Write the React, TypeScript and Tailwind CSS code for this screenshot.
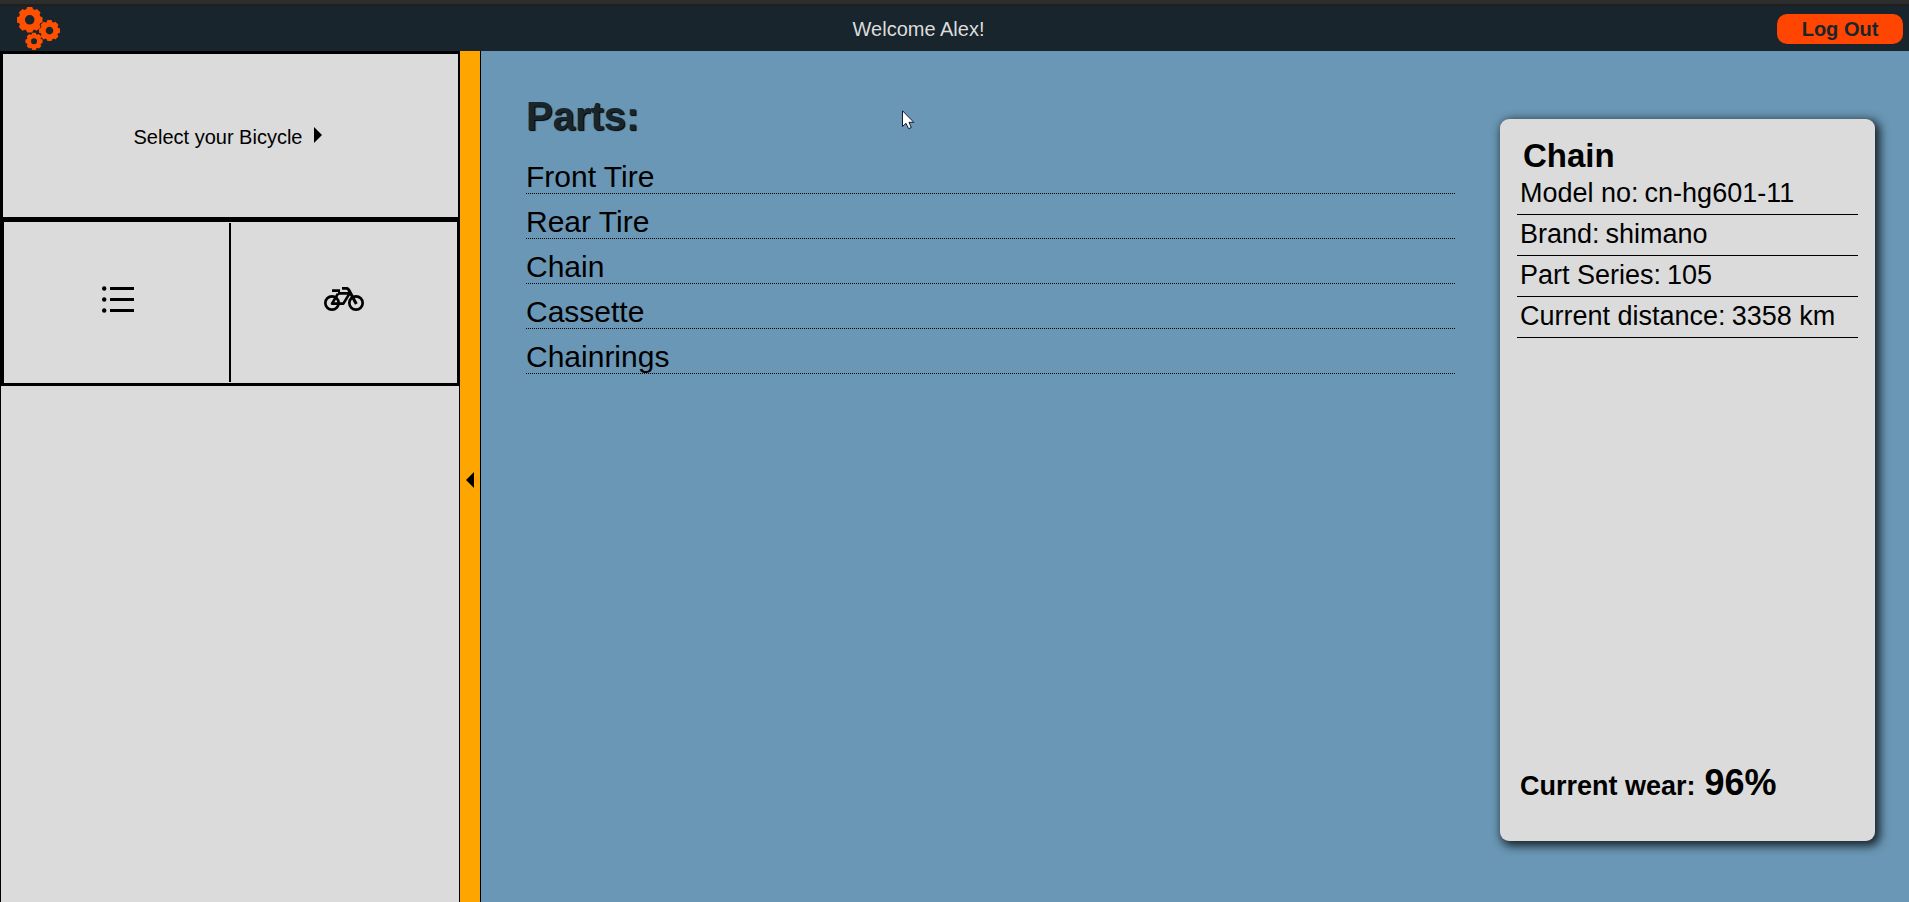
const parts = ["Front Tire", "Rear Tire", "Chain", "Cassette", "Chainrings"];

const details = [
  { label: "Model no", value: "cn-hg601-11" },
  { label: "Brand", value: "shimano" },
  { label: "Part Series", value: "105" },
  { label: "Current distance", value: "3358 km" },
];

type GearProps = { cx: number; cy: number; r: number; hole: number };

function Gear({ cx, cy, r, hole }: GearProps) {
  const teeth = 8;
  const body = r * 0.86;
  const ring = (body + hole) / 2;
  return (
    <g transform={`translate(${cx} ${cy})`}>
      <circle r={ring} fill="none" stroke="currentColor" strokeWidth={body - hole} />
      {Array.from({ length: teeth }, (_, i) => (
        <path
          key={i}
          transform={`rotate(${(360 / teeth) * i})`}
          d={`M${-r * 0.28} ${-body + 1} L${-r * 0.2} ${-r} H${r * 0.2} L${r * 0.28} ${-body + 1}Z`}
          fill="currentColor"
        />
      ))}
    </g>
  );
}

function Logo() {
  return (
    <svg width="43" height="43" viewBox="0 0 43 43" aria-hidden="true">
      <Gear cx={12.7} cy={12.8} r={12.8} hole={4.8} />
      <Gear cx={32.5} cy={23.6} r={10.5} hole={3.8} />
      <Gear cx={17} cy={34.3} r={8.6} hole={3} />
    </svg>
  );
}

function ListIcon() {
  return (
    <svg width="32" height="27" viewBox="0 0 32 27" aria-hidden="true">
      {[2.5, 13.5, 24.5].map((y) => (
        <g key={y}>
          <circle cx="2.2" cy={y} r="2.2" />
          <rect x="8" y={y - 1.5} width="24" height="3" />
        </g>
      ))}
    </svg>
  );
}

function BikeIcon() {
  return (
    <svg width="40" height="24" viewBox="0 0 120 72" fill="none" stroke="currentColor" strokeWidth="8" aria-hidden="true">
      <circle cx="24" cy="48" r="20" />
      <circle cx="96" cy="48" r="20" />
      <path d="M24 11H48M42 20L24 50H58L77 19H42" strokeLinejoin="round" />
      <path d="M54 4H67Q72 4 75 10L97 51" strokeWidth="9" />
    </svg>
  );
}

export default function App() {
  return (
    <div className="relative flex min-h-screen flex-col bg-[#6a97b5] font-['Liberation_Sans',Arial,sans-serif] text-black">
      <header className="flex h-[51px] items-center justify-between border-t-4 border-[#2d2d2d] bg-[#18252c] pr-[6px] pl-[17px] shadow-[inset_0_2px_0_#1f1f1f]">
        <a href="#" aria-label="Home" className="pt-[2px] text-[#ff5000]">
          <Logo />
        </a>
        <p className="pt-[2px] text-[20px] leading-6 text-[#dcdcdc]">Welcome Alex!</p>
        <button className="mt-[3px] h-[30px] w-[126px] rounded-[10px] bg-[#ff4500] text-[20px] leading-6 font-bold text-[#18252c]">
          Log Out
        </button>
      </header>

      <div className="flex grow">
        <aside className="w-[460px] shrink-0 border border-b-0 border-black bg-[#dbdbdb]">
          <button className="flex h-[167px] w-full items-center justify-center gap-3 border-2 border-r border-black pt-[2px] pr-[5px] text-[20px] leading-6">
            Select your Bicycle
            <svg width="8" height="16" viewBox="0 0 8 16" className="mb-1" aria-hidden="true">
              <path d="M0 0L8 8L0 16Z" />
            </svg>
          </button>
          <div className="flex h-[167px] border-3 border-r-2 border-black py-px">
            <button
              aria-label="Parts list"
              className="flex w-1/2 items-center justify-center border-r-2 border-black pb-[7px] pl-[3px]"
            >
              <ListIcon />
            </button>
            <button aria-label="Bicycle" className="flex w-1/2 items-center justify-center pb-[7px]">
              <BikeIcon />
            </button>
          </div>
        </aside>
        <button
          aria-label="Collapse sidebar"
          className="flex w-[21px] shrink-0 items-center justify-center border-r border-black bg-[#ffa500] pt-[6px]"
        >
          <svg width="8" height="16" viewBox="0 0 8 16" aria-hidden="true">
            <path d="M8 0L0 8L8 16Z" />
          </svg>
        </button>

        <main className="flex grow gap-[45px] pr-[34px] pl-[45px]">
          <section className="grow pt-[42px]">
            <h1 className="text-[40px] leading-[46px] font-bold text-[#18252c] [text-shadow:1px_1px_1px_#000]">Parts:</h1>
            <ul className="pt-[10px] text-[30px] leading-[32px]">
              {parts.map((part) => (
                <li key={part} className="border-b border-dotted border-black pt-[12px]">
                  <button className="block w-full text-left">{part}</button>
                </li>
              ))}
            </ul>
          </section>

          <section className="mt-[68px] mb-[61px] flex w-[375px] shrink-0 flex-col rounded-[9px] bg-[#dbdbdb] px-[17px] pt-[18px] pb-[34px] shadow-[3px_3px_10px_2px_#18252c]">
            <h2 className="pl-[6px] text-[33px] leading-[37px] font-bold">Chain</h2>
            <dl className="text-[27px] leading-[34px]">
              {details.map(({ label, value }) => (
                <div key={label} className="flex gap-[6px] border-b border-black pt-[2px] pb-[4px] pl-[3px]">
                  <dt>{label}:</dt>
                  <dd>{value}</dd>
                </div>
              ))}
            </dl>
            <p className="mt-auto flex items-baseline gap-[9px] pl-[3px] text-[27px] leading-[42px] font-bold">
              Current wear: <span className="text-[36px]">96%</span>
            </p>
          </section>
        </main>
      </div>

      <svg
        width="13"
        height="20"
        viewBox="0 0 13 20"
        className="pointer-events-none absolute top-[110px] left-[902px]"
        aria-hidden="true"
      >
        <path d="M.5 .8V16.5L4 13.3L6.6 18.7L9.3 17.6L7 12.3H11.8Z" fill="#fff" stroke="#10182c" />
      </svg>
    </div>
  );
}
